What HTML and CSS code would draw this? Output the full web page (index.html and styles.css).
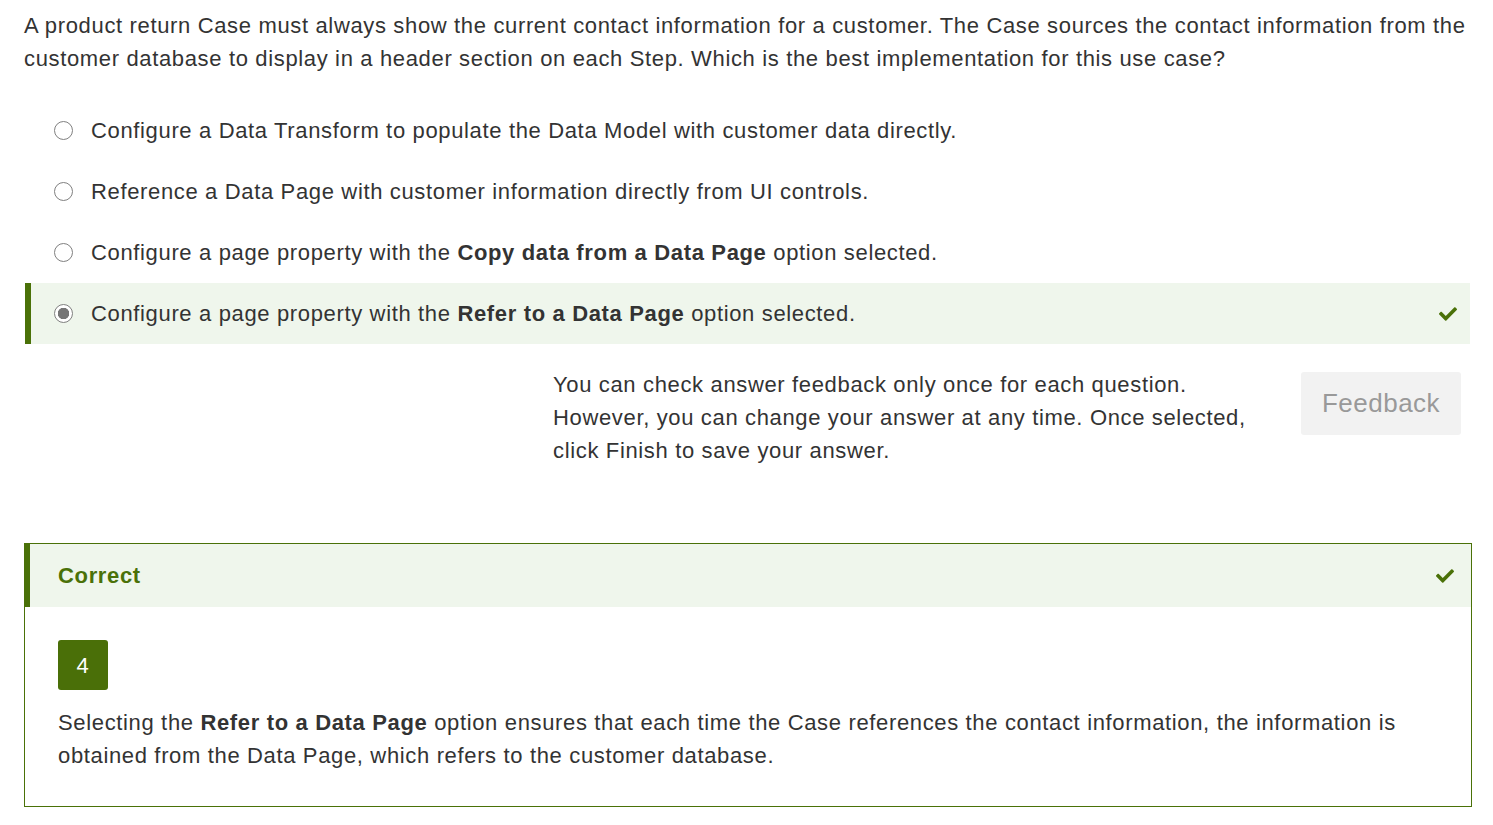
FILE: index.html
```html
<!DOCTYPE html>
<html lang="en">
<head>
<meta charset="utf-8">
<title>Question</title>
<link rel="stylesheet" href="styles.css">
</head>
<body>
<div class="page">
  <p class="question">A product return Case must always show the current contact information for a customer. The Case sources the contact information from the customer database to display in a header section on each Step. Which is the best implementation for this use case?</p>

  <div class="options">
    <div class="option">
      <span class="radio"></span>
      <span class="label">Configure a Data Transform to populate the Data Model with customer data directly.</span>
    </div>
    <div class="option">
      <span class="radio"></span>
      <span class="label">Reference a Data Page with customer information directly from UI controls.</span>
    </div>
    <div class="option">
      <span class="radio"></span>
      <span class="label">Configure a page property with the <b>Copy data from a Data Page</b> option selected.</span>
    </div>
    <div class="option selected">
      <span class="radio"></span>
      <span class="label">Configure a page property with the <b>Refer to a Data Page</b> option selected.</span>
      <svg class="check" viewBox="0 0 512 512" aria-hidden="true"><path d="M173.898 439.404l-166.4-166.4c-9.997-9.997-9.997-26.206 0-36.204l36.203-36.204c9.997-9.998 26.207-9.998 36.204 0L192 312.69 432.095 72.596c9.997-9.997 26.207-9.997 36.204 0l36.203 36.204c9.997 9.997 9.997 26.206 0 36.204l-294.4 294.401c-9.998 9.997-26.207 9.997-36.204-.001z"/></svg>
    </div>
  </div>

  <div class="feedback-row">
    <p class="feedback-note">You can check answer feedback only once for each question. However, you can change your answer at any time. Once selected, click Finish to save your answer.</p>
    <button class="feedback-btn" type="button">Feedback</button>
  </div>

  <div class="result">
    <div class="result-head">
      <span class="result-title">Correct</span>
      <svg class="check" viewBox="0 0 512 512" aria-hidden="true"><path d="M173.898 439.404l-166.4-166.4c-9.997-9.997-9.997-26.206 0-36.204l36.203-36.204c9.997-9.998 26.207-9.998 36.204 0L192 312.69 432.095 72.596c9.997-9.997 26.207-9.997 36.204 0l36.203 36.204c9.997 9.997 9.997 26.206 0 36.204l-294.4 294.401c-9.998 9.997-26.207 9.997-36.204-.001z"/></svg>
    </div>
    <div class="result-body">
      <div class="badge">4</div>
      <p class="explain">Selecting the <b>Refer to a Data Page</b> option ensures that each time the Case references the contact information, the information is obtained from the Data Page, which refers to the customer database.</p>
    </div>
  </div>
</div>
</body>
</html>
```

FILE: styles.css
```css
html, body {
  margin: 0;
  padding: 0;
  background: #ffffff;
}

body {
  font-family: "Liberation Sans", Arial, sans-serif;
  font-size: 22px;
  line-height: 33px;
  letter-spacing: 0.65px;
  color: #333333;
}

.page {
  width: 1448px;
  padding: 9px 0 0 24px;
}

.question {
  margin: 0;
}

b {
  font-weight: bold;
}

.options {
  margin-top: 25px;
  margin-left: 1px;
  width: 1445px;
}

.option {
  display: flex;
  align-items: center;
  height: 61px;
  box-sizing: border-box;
  padding: 0 13px 0 23px;
  border-left: 6px solid transparent;
}

.option.selected {
  background: #eff6ec;
  border-left-color: #4a7108;
}

.radio {
  flex: none;
  width: 19px;
  height: 19px;
  box-sizing: border-box;
  border: 1.5px solid #808080;
  border-radius: 50%;
  background: #fff;
  margin-right: 18px;
}

.option.selected .radio {
  background: radial-gradient(circle, #767676 0 5.5px, #ffffff 6px);
}

.label {
  flex: 1;
}

.check {
  flex: none;
  width: 18px;
  height: 18px;
  fill: #4a7108;
}

.feedback-row {
  display: flex;
  align-items: flex-start;
  justify-content: flex-end;
  margin-top: 24px;
  padding-right: 11px;
}

.feedback-note {
  margin: 0;
  width: 728px;
}

.feedback-btn {
  margin: 4px 0 0 20px;
  width: 160px;
  height: 63px;
  border: none;
  border-radius: 3px;
  background: #f2f2f2;
  color: #999999;
  font-family: "Liberation Sans", Arial, sans-serif;
  font-size: 26px;
  letter-spacing: 0.5px;
  padding: 0;
}

.result {
  margin-top: 76px;
  border: 1px solid #4a7108;
  width: 1446px;
}

.result-head {
  display: flex;
  align-items: center;
  justify-content: space-between;
  height: 63px;
  background: #eff6ec;
  border-left: 5px solid #4a7108;
  padding: 0 17px 0 28px;
}

.result-title {
  font-weight: bold;
  color: #4a7108;
}

.result-body {
  padding: 33px 30px 34px 33px;
}

.badge {
  width: 50px;
  height: 50px;
  border-radius: 3px;
  background: #4a6f08;
  color: #ffffff;
  display: flex;
  align-items: center;
  justify-content: center;
}

.explain {
  margin: 16px 0 0;
}
```
